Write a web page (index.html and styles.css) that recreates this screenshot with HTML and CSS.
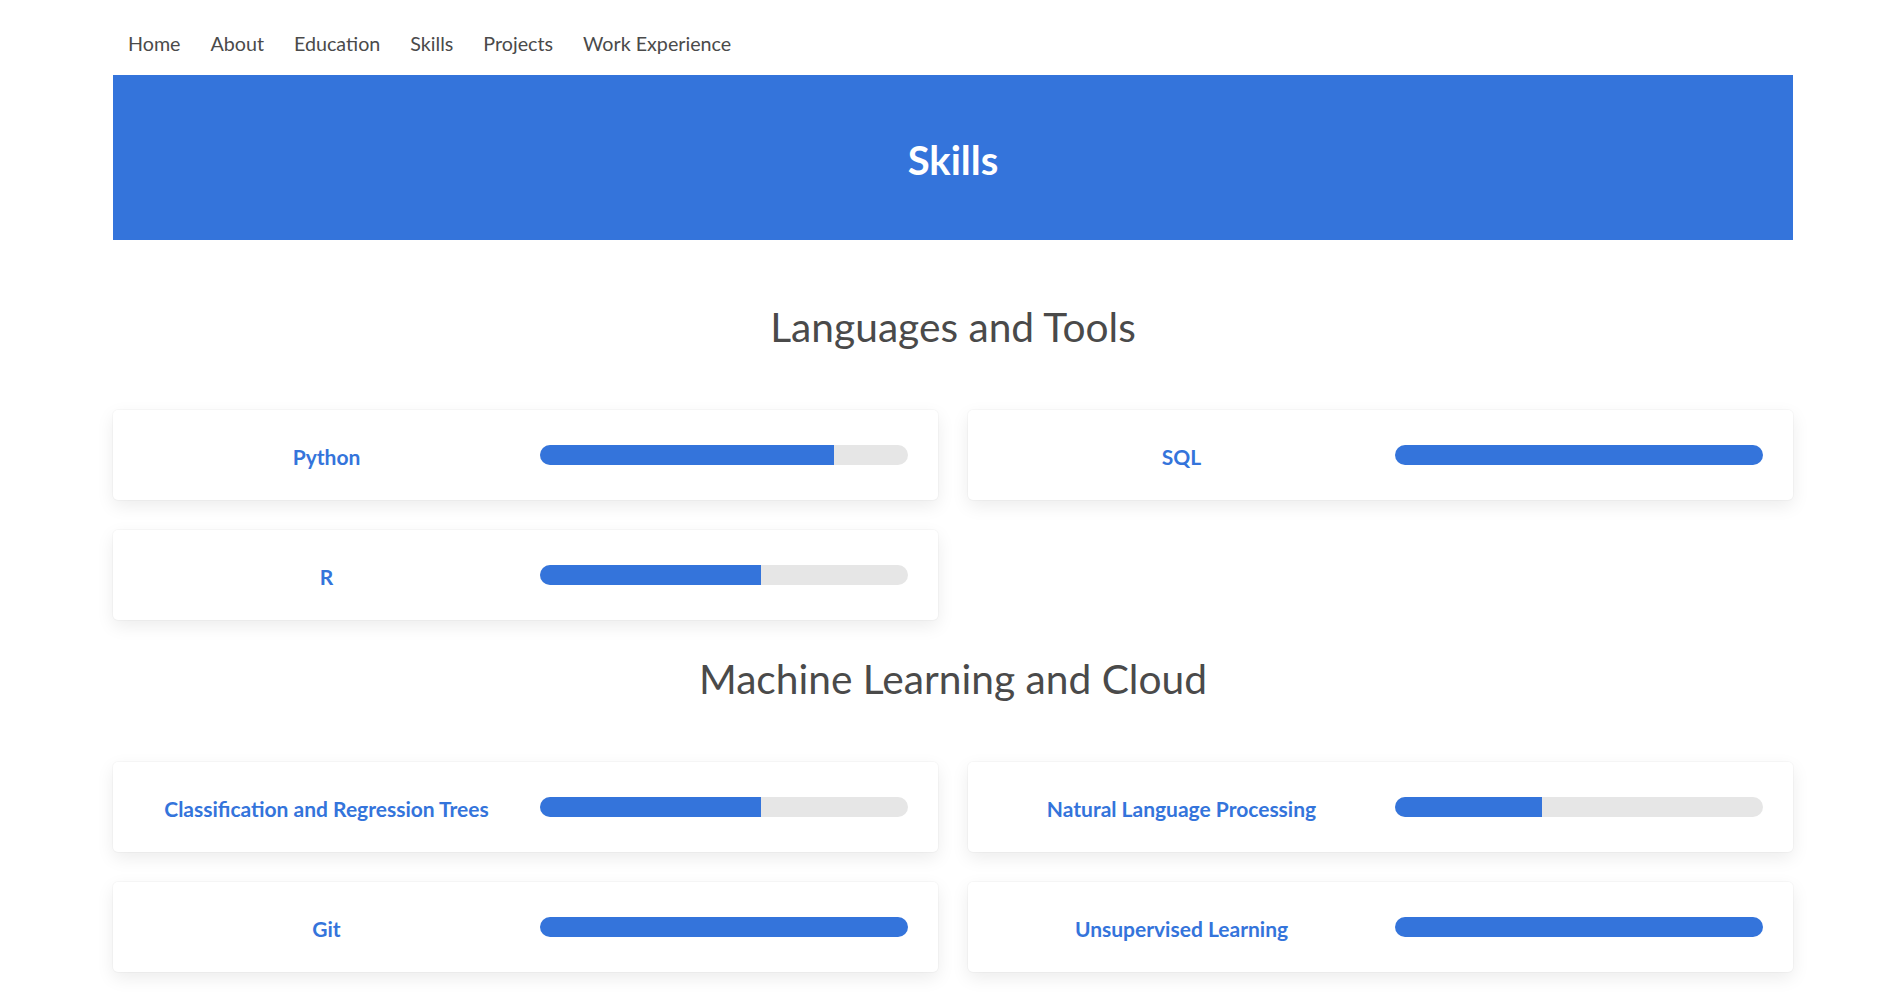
FILE: index.html
```html
<!DOCTYPE html>
<html lang="en">
<head>
<meta charset="utf-8">
<title>Skills</title>
<link rel="stylesheet" href="styles.css">
</head>
<body>
<div class="page">
  <nav class="nav">
    <a class="nav-link" href="#">Home</a>
    <a class="nav-link" href="#">About</a>
    <a class="nav-link" href="#">Education</a>
    <a class="nav-link" href="#">Skills</a>
    <a class="nav-link" href="#">Projects</a>
    <a class="nav-link" href="#">Work Experience</a>
  </nav>
  <header class="banner">
    <h1 class="banner-title">Skills</h1>
  </header>
  <main class="skills">
    <h2 class="group-title">Languages and Tools</h2>
    <div class="grid">
      <div class="card"><div class="label">Python</div><div class="track"><div class="fill" style="width:80%"></div></div></div>
      <div class="card"><div class="label">SQL</div><div class="track"><div class="fill" style="width:100%"></div></div></div>
      <div class="card"><div class="label">R</div><div class="track"><div class="fill" style="width:60%"></div></div></div>
    </div>
    <h2 class="group-title">Machine Learning and Cloud</h2>
    <div class="grid">
      <div class="card"><div class="label">Classification and Regression Trees</div><div class="track"><div class="fill" style="width:60%"></div></div></div>
      <div class="card"><div class="label">Natural Language Processing</div><div class="track"><div class="fill" style="width:40%"></div></div></div>
      <div class="card"><div class="label">Git</div><div class="track"><div class="fill" style="width:100%"></div></div></div>
      <div class="card"><div class="label">Unsupervised Learning</div><div class="track"><div class="fill" style="width:100%"></div></div></div>
    </div>
  </main>
</div>
</body>
</html>
```
FILE: styles.css
```css
* { box-sizing: border-box; }
html, body { margin: 0; padding: 0; background: #ffffff; }
body {
  font-family: Lato, "Open Sans", "Liberation Sans", sans-serif;
  color: #444;
}
.page {
  padding: 0 89px 0 113px;
}
.nav {
  display: flex;
  padding: 29px 0 16px;
}
.nav-link {
  font-size: 19.7px;
  line-height: 30px;
  color: #4a4a4a;
  text-decoration: none;
  padding: 0 15px;
}
.banner {
  background: #3474db;
  height: 165px;
  padding-top: 61px;
}
.banner-title {
  margin: 0;
  text-align: center;
  color: #ffffff;
  font-size: 40px;
  line-height: 48px;
  font-weight: 700;
}
.skills {
  padding-top: 63px;
}
.group-title {
  margin: 0 0 59px;
  text-align: center;
  font-size: 40.7px;
  line-height: 48px;
  font-weight: 400;
  color: #4a4a4a;
}
.grid {
  display: grid;
  grid-template-columns: 1fr 1fr;
  gap: 30px;
  margin-bottom: 35px;
}
.card {
  display: flex;
  align-items: center;
  height: 90px;
  background: #fff;
  border-radius: 5px;
  box-shadow: 0 0 0 1px rgba(0,0,0,0.025), 0 6px 18px rgba(0,0,0,0.08);
  padding-right: 30px;
}
.label {
  flex: 0 0 427px;
  text-align: center;
  color: #3474db;
  font-weight: 700;
  font-size: 21px;
  padding-top: 3px;
}
.track {
  flex: 1;
  height: 20px;
  background: #e6e6e6;
  border-radius: 10px;
  overflow: hidden;
}
.fill {
  height: 100%;
  background: #3474db;
}
```
